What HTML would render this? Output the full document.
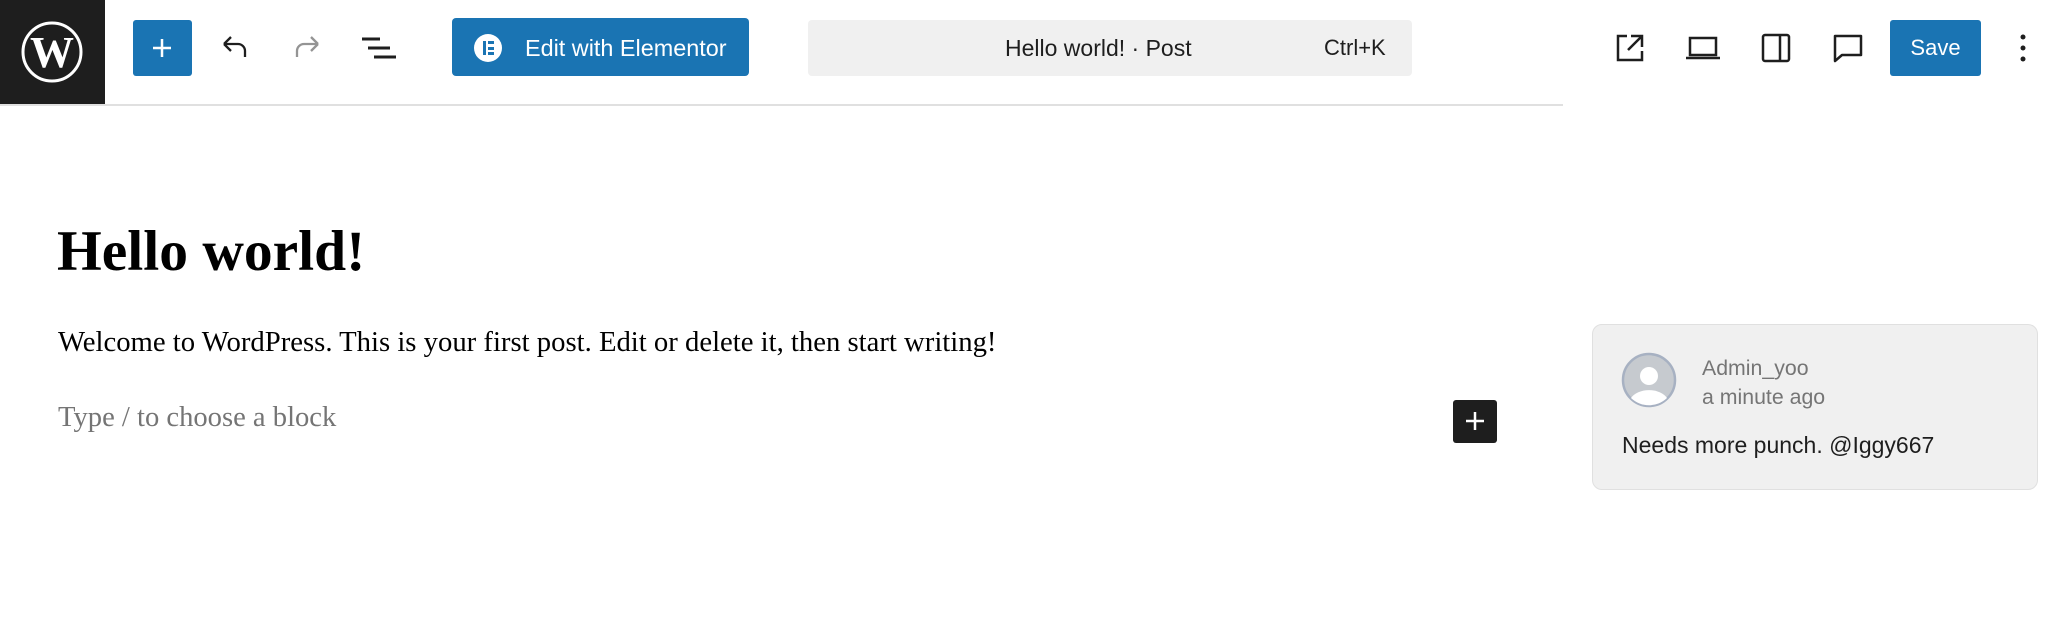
<!DOCTYPE html>
<html><head><style>
body{margin:0;width:2050px;height:628px;background:#fff;position:relative;overflow:hidden;font-family:"Liberation Sans",sans-serif}
.a{position:absolute;white-space:nowrap}
svg{position:absolute}
</style></head><body>
<div class="a" style="left:0;top:0;width:105px;height:105px;background:#1e1e1e"></div>
<svg style="left:17px;top:17px" width="70" height="70" viewBox="0 0 70 70"><circle cx="35" cy="35" r="29" fill="none" stroke="#fff" stroke-width="3"/><text x="35" y="50" font-family="Liberation Serif" font-weight="bold" font-size="44" fill="#fff" text-anchor="middle">W</text></svg>
<div class="a" style="left:0;top:104px;width:1563px;height:2px;background:#e0e0e0"></div>
<div class="a" style="left:133px;top:20px;width:59px;height:56px;background:#1a74b3;border-radius:3px"></div>
<svg style="left:148px;top:34px" width="28" height="28"><path d="M14 5v18M5 14h18" stroke="#fff" stroke-width="2.5"/></svg>
<svg style="left:220px;top:34px" width="30" height="28" viewBox="0 0 30 28"><path d="M4 10h14a7 7 0 0 1 7 7v6M4 10l7-7M4 10l7 7" fill="none" stroke="#1e1e1e" stroke-width="2.3"/></svg>
<svg style="left:292px;top:34px" width="30" height="28" viewBox="0 0 30 28"><path d="M26 10H12a7 7 0 0 0-7 7v6M26 10l-7-7M26 10l-7 7" fill="none" stroke="#949494" stroke-width="2.3"/></svg>
<svg style="left:362px;top:36px" width="34" height="26"><path d="M0 3h18M6 12h22M12 21h22" stroke="#1e1e1e" stroke-width="3"/></svg>
<div class="a" style="left:452px;top:18px;width:297px;height:58px;background:#1a74b3;border-radius:4px"></div>
<div class="a" style="left:474px;top:34px;width:28px;height:28px;border-radius:50%;background:#fff"></div>
<div class="a" style="left:483px;top:41px;width:3px;height:14px;background:#1a74b3"></div>
<div class="a" style="left:488px;top:41px;width:6px;height:3px;background:#1a74b3"></div>
<div class="a" style="left:488px;top:46.5px;width:6px;height:3px;background:#1a74b3"></div>
<div class="a" style="left:488px;top:52px;width:6px;height:3px;background:#1a74b3"></div>
<div class="a" style="left:525px;top:35px;color:#fff;font-size:23.4px">Edit with Elementor</div>
<div class="a" style="left:808px;top:20px;width:604px;height:56px;background:#f0f0f0;border-radius:4px"></div>
<div class="a" style="left:1005px;top:35px;color:#1e1e1e;font-size:23px">Hello world! · Post</div>
<div class="a" style="left:1324px;top:35px;color:#1e1e1e;font-size:22px">Ctrl+K</div>
<svg style="left:1615px;top:33px" width="30" height="30" viewBox="0 0 30 30"><path d="M12 3H3v24h24v-9M16 3h11v11M27 3L13 17" fill="none" stroke="#1e1e1e" stroke-width="2.5"/></svg>
<svg style="left:1685px;top:33px" width="36" height="30" viewBox="0 0 36 30"><path d="M5 5h26v17H5zM1 25h34" fill="none" stroke="#1e1e1e" stroke-width="2.5"/></svg>
<svg style="left:1761px;top:33px" width="30" height="30" viewBox="0 0 30 30"><rect x="2" y="2" width="26" height="26" rx="2" fill="none" stroke="#1e1e1e" stroke-width="2.5"/><path d="M19 2v26" stroke="#1e1e1e" stroke-width="2.5"/></svg>
<svg style="left:1832px;top:33px" width="32" height="30" viewBox="0 0 32 30"><path d="M3 3h26v19H10l-7 6z" fill="none" stroke="#1e1e1e" stroke-width="2.5" stroke-linejoin="round"/></svg>
<div class="a" style="left:1890px;top:20px;width:91px;height:56px;background:#1a74b3;border-radius:3px;color:#fff;font-size:22px;line-height:56px;text-align:center">Save</div>
<svg style="left:2019px;top:33px" width="8" height="30"><circle cx="4" cy="4" r="2.5" fill="#1e1e1e"/><circle cx="4" cy="15" r="2.5" fill="#1e1e1e"/><circle cx="4" cy="26" r="2.5" fill="#1e1e1e"/></svg>
<div class="a" style="left:57px;top:219px;font-family:'Liberation Serif',serif;font-weight:bold;font-size:57.5px;color:#000">Hello world!</div>
<div class="a" style="left:58px;top:326px;font-family:'Liberation Serif',serif;font-size:28.7px;color:#000">Welcome to WordPress. This is your first post. Edit or delete it, then start writing!</div>
<div class="a" style="left:58px;top:402px;font-family:'Liberation Serif',serif;font-size:28.6px;color:#757575">Type / to choose a block</div>
<div class="a" style="left:1453px;top:400px;width:44px;height:43px;background:#1e1e1e;border-radius:3px"></div>
<svg style="left:1463px;top:409px" width="24" height="24"><path d="M12 3v18M3 12h18" stroke="#fff" stroke-width="2.5"/></svg>
<div class="a" style="left:1592px;top:324px;width:446px;height:166px;background:#f0f0f0;border:1px solid #e0e0e0;border-radius:10px;box-sizing:border-box"></div>
<svg style="left:1621px;top:352px" width="56" height="56" viewBox="0 0 56 56"><circle cx="28" cy="28" r="26" fill="#c6cacf" stroke="#a7b1c2" stroke-width="2.5"/><circle cx="28" cy="24" r="9" fill="#fff"/><path d="M10 46a20 14 0 0 1 36 0a26 26 0 0 1-36 0z" fill="#fff"/></svg>
<div class="a" style="left:1702px;top:356px;font-size:21.3px;color:#757575">Admin_yoo</div>
<div class="a" style="left:1702px;top:385px;font-size:21.3px;color:#757575">a minute ago</div>
<div class="a" style="left:1622px;top:432px;font-size:23px;color:#1e1e1e">Needs more punch. @Iggy667</div>
</body></html>
